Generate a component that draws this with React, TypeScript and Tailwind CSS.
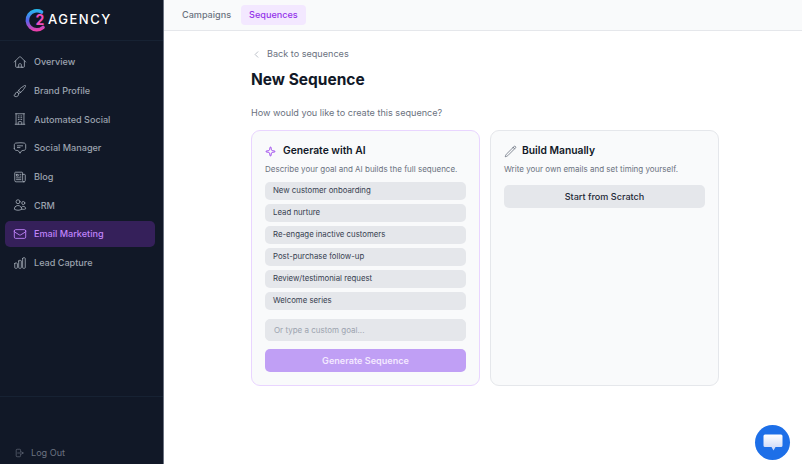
import { ChevronLeft, Sparkle } from 'lucide-react'
import {
  HiOutlineHome,
  HiOutlinePaintBrush,
  HiOutlineBuildingOffice,
  HiOutlineChatBubbleBottomCenterText,
  HiOutlineNewspaper,
  HiOutlineUsers,
  HiOutlineEnvelope,
  HiOutlineChartBar,
  HiOutlineArrowRightOnRectangle,
  HiOutlinePencil,
} from 'react-icons/hi2'

const navItems = [
  { label: 'Overview', icon: HiOutlineHome },
  { label: 'Brand Profile', icon: HiOutlinePaintBrush },
  { label: 'Automated Social', icon: HiOutlineBuildingOffice },
  { label: 'Social Manager', icon: HiOutlineChatBubbleBottomCenterText },
  { label: 'Blog', icon: HiOutlineNewspaper },
  { label: 'CRM', icon: HiOutlineUsers },
  { label: 'Email Marketing', icon: HiOutlineEnvelope, active: true },
  { label: 'Lead Capture', icon: HiOutlineChartBar },
]

const goals = [
  'New customer onboarding',
  'Lead nurture',
  'Re-engage inactive customers',
  'Post-purchase follow-up',
  'Review/testimonial request',
  'Welcome series',
]

function Logo() {
  return (
    <div className="flex items-center h-[41px] pl-[22px] border-b border-[#172233]">
      <svg width="26" height="24" viewBox="0 0 26 24" fill="none">
        <defs>
          <linearGradient id="ring" x1="12" y1="1" x2="14" y2="23" gradientUnits="userSpaceOnUse">
            <stop offset="0" stopColor="#22c0ee" />
            <stop offset="0.5" stopColor="#5a62ee" />
            <stop offset="1" stopColor="#f03fa8" />
          </linearGradient>
        </defs>
        <path d="M19.5 4 A 9.5 9.5 0 1 0 21 19.5" stroke="url(#ring)" strokeWidth="3.6" strokeLinecap="round" />
        <text x="13.5" y="17" fontSize="14" fontWeight="700" fill="#ee4fc0" fontFamily="Inter, sans-serif">2</text>
      </svg>
      <span className="text-[13px] font-medium tracking-[1.5px] text-white">AGENCY</span>
    </div>
  )
}

function Sidebar() {
  return (
    <aside className="w-[164px] shrink-0 h-full flex flex-col bg-[#111827] border-r border-[#6b7280]">
      <Logo />
      <nav className="flex flex-col gap-[2.7px] pl-[5px] pr-[8px] pt-[8px]">
        {navItems.map((item) => {
          const Icon = item.icon
          return (
            <div
              key={item.label}
              className={`flex items-center gap-[7px] h-[26px] pl-[8px] rounded-[5px] text-[9.1px] font-medium ${
                item.active ? 'bg-[#35205a] text-[#c084fc]' : 'text-[#9ca3af]'
              }`}
            >
              <Icon className="w-[14px] h-[14px]" />
              <span>{item.label}</span>
            </div>
          )
        })}
      </nav>
      <div className="mt-auto h-[68px] border-t border-[#172233] flex items-center gap-[7px] pl-[14px] pt-[44px] text-[9.1px] text-[#6b7280]">
        <HiOutlineArrowRightOnRectangle className="w-[10px] h-[10px]" />
        <span>Log Out</span>
      </div>
    </aside>
  )
}

function GenerateCard() {
  return (
    <div className="w-[229px] h-[256px] rounded-[9px] border border-[#e9d5ff] bg-[#f9fafb] px-[13px] pt-[12px]">
      <div className="flex items-center gap-[7px] h-[16px]">
        <Sparkle className="w-[11px] h-[11px] text-[#9333ea]" strokeWidth={1.8} />
        <h2 className="text-[10.3px] font-semibold text-[#111827]">Generate with AI</h2>
      </div>
      <p className="mt-[4px] text-[8px] leading-[12px] text-[#6b7280] whitespace-nowrap">Describe your goal and AI builds the full sequence.</p>
      <div className="mt-[7px] flex flex-col gap-[4px]">
        {goals.map((goal) => (
          <div key={goal} className="h-[18px] flex items-center px-[8px] rounded-[5px] bg-[#e5e7eb] text-[7.8px] text-[#374151]">
            {goal}
          </div>
        ))}
      </div>
      <div className="mt-[9px] h-[22px] flex items-center px-[8px] rounded-[5px] border border-[#e5e7eb] bg-[#e5e7eb] text-[8px] text-[#9ca3af]">
        Or type a custom goal...
      </div>
      <button className="mt-[8px] w-full h-[23px] rounded-[5px] bg-[#c09ff5] text-[9.1px] font-semibold text-[#f3e8ff]">
        Generate Sequence
      </button>
    </div>
  )
}

function ManualCard() {
  return (
    <div className="w-[229px] h-[256px] rounded-[9px] border border-[#e5e7eb] bg-[#f9fafb] px-[13px] pt-[12px]">
      <div className="flex items-center gap-[5px] h-[16px]">
        <HiOutlinePencil className="w-[13px] h-[13px] text-[#6b7280]" />
        <h2 className="text-[10.3px] font-semibold text-[#111827]">Build Manually</h2>
      </div>
      <p className="mt-[4px] text-[8px] leading-[12px] text-[#6b7280] whitespace-nowrap">Write your own emails and set timing yourself.</p>
      <button className="mt-[10px] w-full h-[23px] rounded-[5px] bg-[#e5e7eb] text-[9.1px] font-medium text-[#1f2937]">
        Start from Scratch
      </button>
    </div>
  )
}

export default function App() {
  return (
    <div className="relative w-[802px] h-[464px] flex overflow-hidden bg-white font-['Inter',sans-serif]">
      <Sidebar />
      <main className="flex-1 flex flex-col">
        <div className="h-[31px] flex items-center gap-[2px] pl-[10px] bg-[#f9fafb] border-b border-[#e5e7eb]">
          <span className="px-[8px] text-[9.1px] font-medium text-[#6b7280]">Campaigns</span>
          <span className="h-[20px] flex items-center px-[8px] rounded-[4px] bg-[#f3e8ff] text-[9.1px] font-medium text-[#9333ea]">Sequences</span>
        </div>
        <div className="pl-[87px] pt-[16px]">
          <div className="flex items-center gap-[5px] h-[14px] text-[9.1px] text-[#6b7280]">
            <ChevronLeft className="w-[11px] h-[11px] text-[#9ca3af]" strokeWidth={1.5} />
            <span>Back to sequences</span>
          </div>
          <h1 className="mt-[7px] text-[15.5px] leading-[24px] font-bold text-[#111827]">New Sequence</h1>
          <p className="mt-[14px] text-[9.1px] leading-[14px] text-[#6b7280]">How would you like to create this sequence?</p>
          <div className="mt-[10px] flex gap-[10px]">
            <GenerateCard />
            <ManualCard />
          </div>
        </div>
      </main>
      {/* Chat bubble */}
      <div className="absolute left-[755px] top-[425px] w-[35px] h-[35px] rounded-full bg-[#1d6fe8] flex items-center justify-center">
        <svg width="20" height="17" viewBox="0 0 20 17">
          <defs>
            <linearGradient id="bubble" x1="0" y1="0" x2="0" y2="1">
              <stop offset="0" stopColor="#ffffff" />
              <stop offset="1" stopColor="#c7d5f7" />
            </linearGradient>
          </defs>
          <path d="M2 0.5 H18 A1.5 1.5 0 0 1 19.5 2 V11.5 A1.5 1.5 0 0 1 18 13 H12.5 L10.5 16.5 L8.5 13 H2 A1.5 1.5 0 0 1 0.5 11.5 V2 A1.5 1.5 0 0 1 2 0.5 Z" fill="url(#bubble)" />
        </svg>
      </div>
    </div>
  )
}
